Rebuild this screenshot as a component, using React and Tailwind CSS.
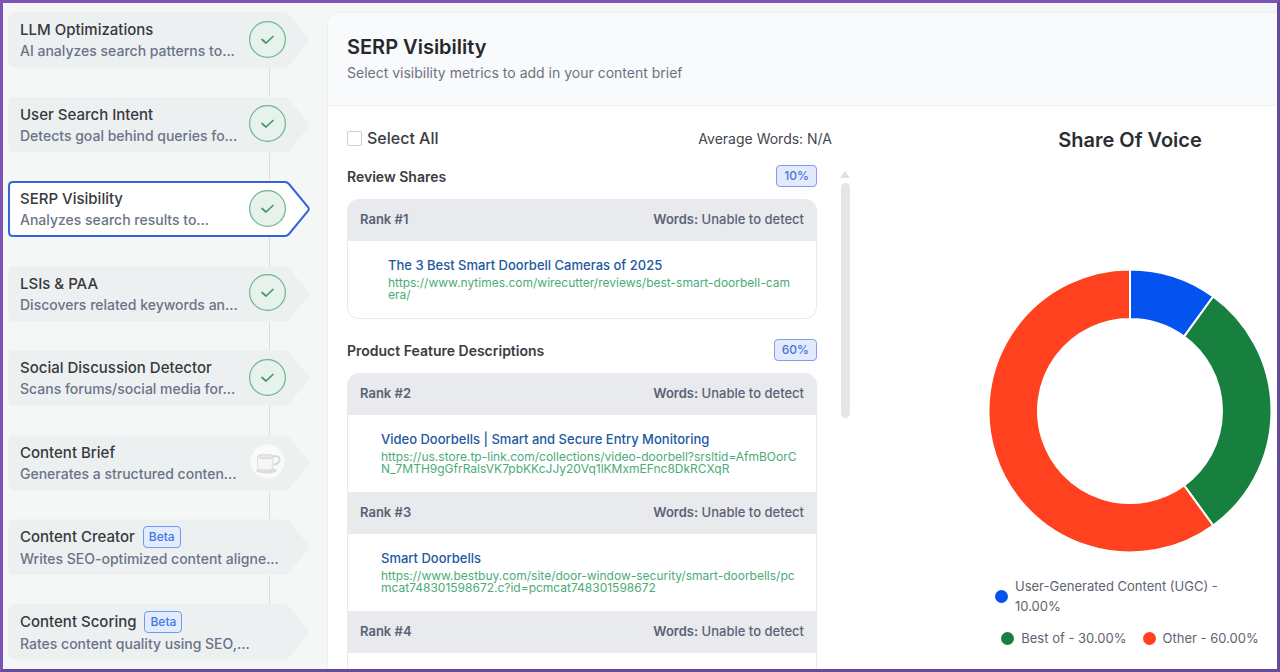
import { useState } from 'react'
import clsx from 'clsx'

const steps = [
  { title: 'LLM Optimizations', text: 'AI analyzes search patterns to...', status: 'done' },
  { title: 'User Search Intent', text: 'Detects goal behind queries fo...', status: 'done' },
  { title: 'SERP Visibility', text: 'Analyzes search results to...', status: 'done' },
  { title: 'LSIs & PAA', text: 'Discovers related keywords an...', status: 'done' },
  { title: 'Social Discussion Detector', text: 'Scans forums/social media for...', status: 'done' },
  { title: 'Content Brief', text: 'Generates a structured conten...', status: 'pending' },
  { title: 'Content Creator', text: 'Writes SEO-optimized content aligne...', beta: true },
  { title: 'Content Scoring', text: 'Rates content quality using SEO,...', beta: true }
]

const groups = [
  {
    name: 'Review Shares',
    share: '10%',
    results: [
      {
        rank: 1,
        title: 'The 3 Best Smart Doorbell Cameras of 2025',
        url: 'https://www.nytimes.com/wirecutter/reviews/best-smart-doorbell-camera/'
      }
    ]
  },
  {
    name: 'Product Feature Descriptions',
    share: '60%',
    results: [
      {
        rank: 2,
        title: 'Video Doorbells | Smart and Secure Entry Monitoring',
        url: 'https://us.store.tp-link.com/collections/video-doorbell?srsltid=AfmBOorCN_7MTH9gGfrRalsVK7pbKKcJJy20Vq1lKMxmEFnc8DkRCXqR'
      },
      {
        rank: 3,
        title: 'Smart Doorbells',
        url: 'https://www.bestbuy.com/site/door-window-security/smart-doorbells/pcmcat748301598672.c?id=pcmcat748301598672'
      },
      { rank: 4 }
    ]
  }
]

const voices = [
  { label: 'User-Generated Content (UGC)', value: 10, color: '#0453f0' },
  { label: 'Best of', value: 30, color: '#17803f' },
  { label: 'Other', value: 60, color: '#ff4120' }
]

export default function App() {
  const [active, setActive] = useState(2)

  return (
    <div className="h-screen overflow-hidden border-3 border-t-[#7b54b6] border-l-[#7b54b6] border-r-[#654c98] border-b-[#654c98] bg-[#f5f6f6] font-['Inter',sans-serif] flex">
      {/* Steps */}
      <nav className="w-[324px] shrink-0 pl-[5px] py-[9px] flex flex-col">
        {steps.map((step, i) => (
          <Step key={step.title} step={step} first={i === 0} active={i === active} onClick={() => setActive(i)} />
        ))}
      </nav>

      {/* Panel */}
      <main className="flex-1 min-w-0 mt-[9px] rounded-tl-xl border-t border-l border-[#eceef0] bg-white overflow-hidden flex flex-col">
        <header className="bg-[#f8fafc] border-b border-[#edeff1] pl-[19px] pt-5 pb-5">
          <h1 className="text-[20px] leading-7 font-semibold text-[#26282c]">SERP Visibility</h1>
          <p className="text-[14px] leading-6 text-[#6b7280]">Select visibility metrics to add in your content brief</p>
        </header>

        <div className="flex-1 min-h-0 flex">
          <section className="flex-1 min-w-0 pl-[19px] mr-[133px] pt-5 flex flex-col">
            <div className="flex items-center justify-between pr-[18px] h-6">
              <label className="flex items-center gap-[5px] text-[16px] font-medium text-[#3b3d42]">
                <input
                  type="checkbox"
                  className="appearance-none size-[15px] rounded-[2px] border border-[#cfcfd3] bg-white checked:bg-blue-600"
                />
                Select All
              </label>
              <span className="text-[14px] text-[#44474d]">Average Words: N/A</span>
            </div>

            <div className="flex-1 min-h-0 flex gap-[23px] pt-[15px]">
              <div className="flex-1 min-w-0 flex flex-col gap-5">
                {groups.map((group) => (
                  <Group key={group.name} group={group} />
                ))}
              </div>
              <ScrollBar />
            </div>
          </section>

          {/* Share of voice */}
          <aside className="w-[294px] shrink-0 pt-5 flex flex-col items-center">
            <h2 className="text-[20px] leading-7 font-semibold text-[#2b2d31]">Share Of Voice</h2>
            <Donut />
            <ul className="w-full mt-[23px] px-3 flex flex-wrap justify-center gap-x-4 gap-y-3 text-[13px] leading-5 text-[#5d6472]">
              {voices.map((voice) => (
                <li key={voice.label} className="flex items-center gap-[7px]">
                  <span className="size-[13px] shrink-0 rounded-full" style={{ background: voice.color }} />
                  <span>
                    {voice.label} - {voice.value.toFixed(2)}%
                  </span>
                </li>
              ))}
            </ul>
          </aside>
        </div>
      </main>
    </div>
  )
}

function Step({ step, first, active, onClick }) {
  return (
    <>
      {!first && <div className="flex-1 w-px ml-[261px] bg-[#dcdddf]" />}
      <button onClick={onClick} className="relative w-[302px] h-14 shrink-0 pl-3 pr-6 flex items-center text-left">
        <svg className="absolute inset-0 size-full" viewBox="0 0 302 56" aria-hidden="true">
          <path
            d="M5 1H277Q279 1 281 3L300 26Q301.500 28 300 30L281 53Q279 55 277 55H5Q1 55 1 51V5Q1 1 5 1Z"
            fill={active ? '#ffffff' : '#edf0f1'}
            stroke={active ? '#2f65d9' : '#edf0f1'}
            strokeWidth={active ? 2 : 1}
          />
        </svg>
        <span className="relative flex-1 min-w-0 whitespace-nowrap">
          <span className="flex items-center gap-2 text-[15px] leading-[21px] font-medium text-[#37393e]">
            {step.title}
            {step.beta && <Badge>Beta</Badge>}
          </span>
          <span className="block text-[14px] leading-[21px] font-medium text-[#6b7388]">{step.text}</span>
        </span>
        {step.status === 'done' && <DoneIcon />}
        {step.status === 'pending' && <CupIcon />}
      </button>
    </>
  )
}

function Badge({ children }) {
  return (
    <span className="h-[22px] px-[5px] flex items-center rounded-[4px] border border-[#6f9bf0] bg-[#e3ecfd] text-[12px] leading-4 font-medium text-[#3f76e8]">
      {children}
    </span>
  )
}

function DoneIcon() {
  return (
    <svg className="relative size-[37px] mb-0.5 shrink-0" viewBox="0 0 37 37" fill="none" aria-hidden="true">
      <circle cx="18.500" cy="18.500" r="17.900" fill="#e6f2eb" stroke="#6db491" strokeWidth="1.200" />
      <path d="M13 18.500L17 22L24 15.500" stroke="#45966d" strokeWidth="1.700" strokeLinecap="round" strokeLinejoin="round" />
    </svg>
  )
}

function CupIcon() {
  return (
    <svg className="relative size-[37px] mb-0.5 shrink-0" viewBox="0 0 37 37" fill="none" aria-hidden="true">
      <circle cx="18.500" cy="18.500" r="17" fill="#f9fafa" />
      <ellipse cx="17.500" cy="27.500" rx="10.500" ry="3" fill="#dcddde" />
      <path d="M23.500 14C27 12 31 13.500 30.500 17C30 20.500 26 21.500 23.500 21.500" stroke="#d9dadb" strokeWidth="2" />
      <path d="M8.500 13.500V22Q8.500 27 13 27H19.500Q24 27 24 22V13.500Z" fill="#f6f6f6" stroke="#dcddde" />
      <ellipse cx="16.500" cy="13.500" rx="8" ry="2" fill="#e6e6e7" stroke="#d6d7d8" />
    </svg>
  )
}

function Group({ group }) {
  return (
    <div>
      <div className="h-[22px] flex items-center justify-between">
        <h3 className="text-[14px] font-semibold text-[#3a3c41]">{group.name}</h3>
        <span className="h-[22px] px-[7px] flex items-center rounded-[4px] border border-[#7f9fec] bg-[#e2eafc] text-[12px] leading-4 font-medium text-[#4b74dc]">
          {group.share}
        </span>
      </div>
      <div className="mt-3 rounded-xl border border-t-0 border-[#e8eaed] overflow-hidden">
        {group.results.map((result) => (
          <Result key={result.rank} result={result} />
        ))}
      </div>
    </div>
  )
}

function Result({ result }) {
  return (
    <article>
      <div className="h-[42px] px-3 flex items-center justify-between bg-[#e8eaed] text-[13px] text-[#5b6275]">
        <strong className="font-semibold">Rank #{result.rank}</strong>
        <span className="font-medium">
          <strong className="font-semibold">Words:</strong> Unable to detect
        </span>
      </div>
      <div className={clsx('pt-[15px] pb-[17px]', result.rank === 1 ? 'pl-10 pr-6' : 'pl-[33px] pr-4')}>
        {result.title && (
          <>
            <a href={result.url} className="block text-[13px] leading-[18px] font-medium text-[#2159a0]">
              {result.title}
            </a>
            <p className="mt-[3px] text-[12px] leading-3 break-all text-[#4bab78]">{result.url}</p>
          </>
        )}
      </div>
    </article>
  )
}

function ScrollBar() {
  return (
    <div className="w-2.5 shrink-0 pt-1.5 flex flex-col items-center gap-[5px]">
      <svg className="w-2.5 h-[7px]" viewBox="0 0 10 7" aria-hidden="true">
        <path d="M5 0L10 7H0Z" fill="#e2e2e2" />
      </svg>
      <div className="w-[9px] h-[235px] rounded-full bg-[#e6e6e6]" />
    </div>
  )
}

function Donut() {
  const point = (radius, value) => {
    const angle = (value / 100) * Math.PI * 2
    return `${142 + radius * Math.sin(angle)} ${142 - radius * Math.cos(angle)}`
  }

  return (
    <svg className="size-[284px] mt-[115px]" viewBox="0 0 284 284" role="img" aria-label="Share of voice">
      {voices.map((voice, i) => {
        const start = voices.slice(0, i).reduce((sum, v) => sum + v.value, 0)
        const end = start + voice.value
        const large = voice.value > 50 ? 1 : 0
        return (
          <path
            key={voice.label}
            d={`M${point(141.5, start)} A141.5 141.5 0 ${large} 1 ${point(141.5, end)} L${point(92, end)} A92 92 0 ${large} 0 ${point(92, start)}Z`}
            fill={voice.color}
            stroke="#ffffff"
            strokeWidth="2"
          />
        )
      })}
    </svg>
  )
}
